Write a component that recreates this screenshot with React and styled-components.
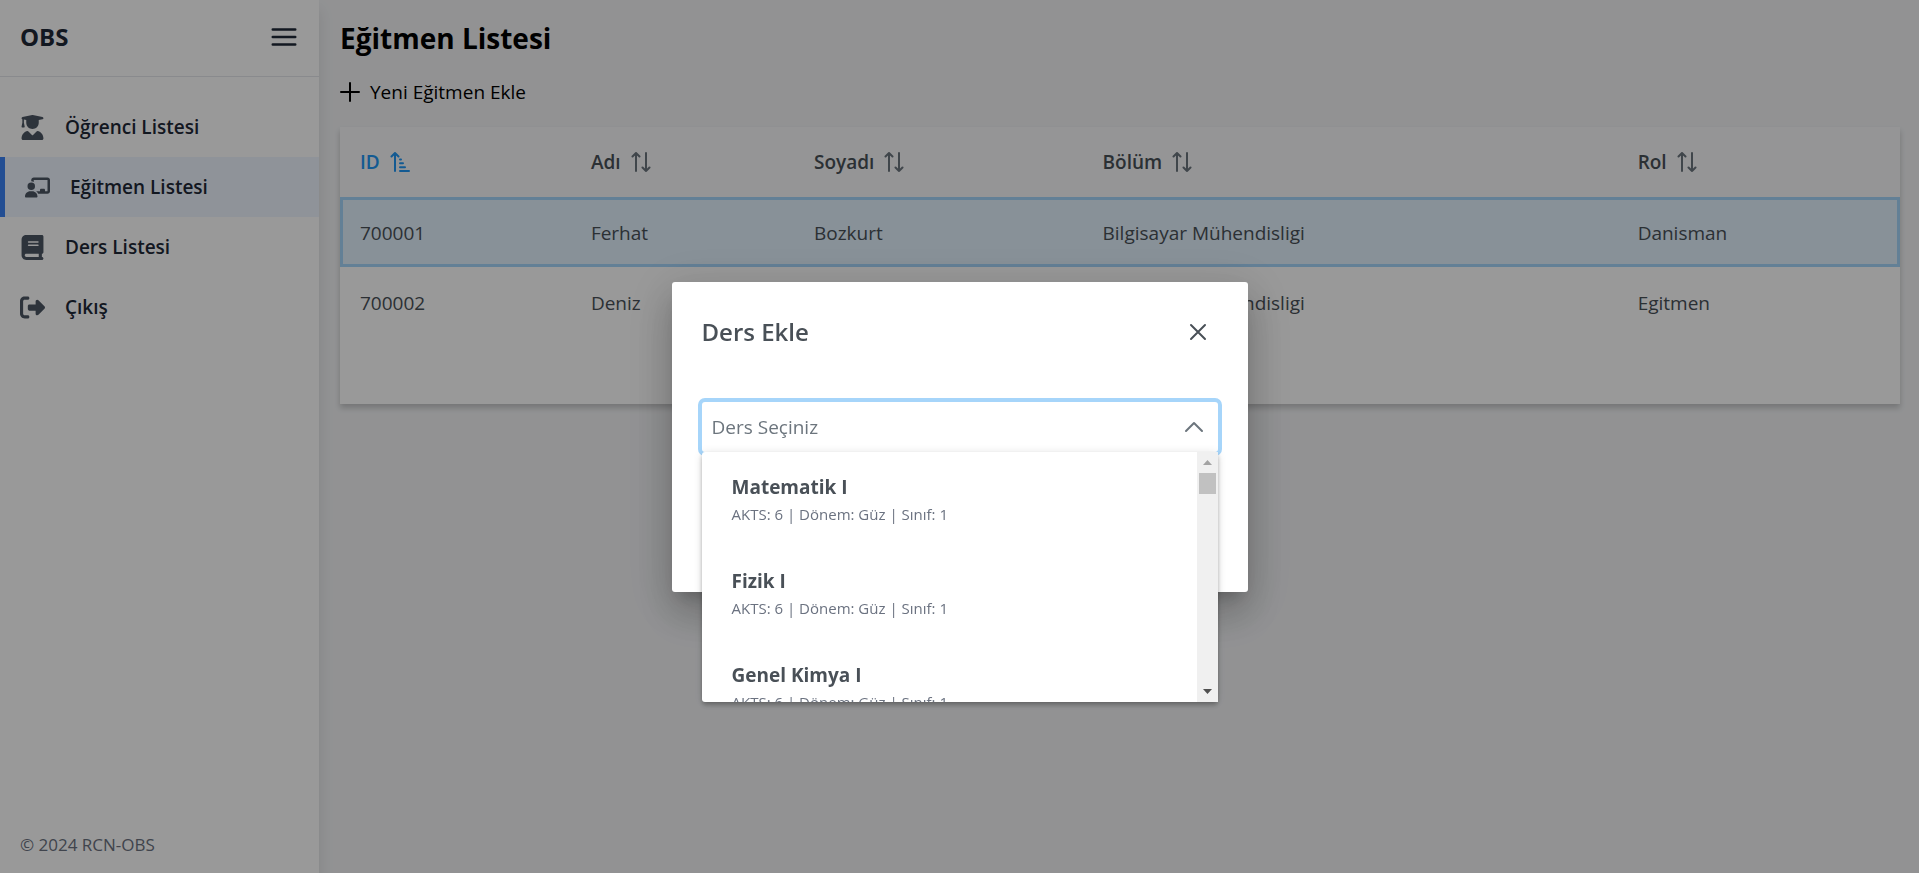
import React from "react";
import styled, { createGlobalStyle, css } from "styled-components";
import {
  FaUserGraduate,
  FaChalkboardUser,
  FaBook,
  FaRightFromBracket,
} from "react-icons/fa6";

const GlobalStyle = createGlobalStyle`
  *, *::before, *::after { box-sizing: border-box; }
  body {
    margin: 0;
    background: #f3f4f6;
    color: #000;
    font-family: "Open Sans", "Noto Sans", sans-serif;
    font-size: 19px;
    line-height: 30px;
  }
  button, select { font: inherit; color: inherit; }
  h1, h2, ul { margin: 0; padding: 0; }
  ul { list-style: none; }
`;

const Layout = styled.div`
  display: flex;
  min-height: 100vh;
`;

const Sidebar = styled.aside`
  display: flex;
  flex-direction: column;
  flex: 0 0 auto;
  width: 319px;
  background: #fff;
  box-shadow: 0 10px 15px rgba(0, 0, 0, 0.1);
`;

const SidebarHeader = styled.header`
  display: flex;
  align-items: center;
  justify-content: space-between;
  height: 77px;
  padding: 0 20px 2px;
  border-bottom: 1px solid #e5e7eb;
  color: #1f2937;
`;

const Brand = styled.span`
  font-size: 24px;
  font-weight: 700;
`;

const IconButton = styled.button`
  display: grid;
  place-items: center;
  padding: 0;
  border: 0;
  background: none;
  cursor: pointer;
`;

const Nav = styled.nav`
  flex: 1;
  padding-top: 20px;
`;

const NavLink = styled.a`
  display: flex;
  align-items: center;
  gap: 20px;
  height: 60px;
  padding: 0 20px;
  color: #1f2937;
  font-weight: 600;
  text-decoration: none;

  svg {
    width: 25px;
    height: 25px;
    color: #4b5563;
  }

  ${(p) =>
    p.$active &&
    css`
      border-left: 5px solid #3b82f6;
      background: #eff6ff;
    `}
`;

const Copyright = styled.footer`
  padding: 0 20px;
  height: 43px;
  color: #6b7280;
  font-size: 17px;
`;

const Main = styled.main`
  flex: 1;
  min-width: 0;
  padding: 19px 19px 20px 21px;
`;

const PageTitle = styled.h1`
  font-size: 28px;
  font-weight: 700;
  line-height: 38px;
`;

const AddButton = styled.button`
  display: flex;
  align-items: center;
  gap: 10px;
  margin: 20px 0;
  padding: 0;
  border: 0;
  background: none;
  cursor: pointer;
`;

const TableCard = styled.section`
  padding-bottom: 67px;
  background: #fff;
  box-shadow: 0 4px 6px rgba(0, 0, 0, 0.2);
`;

const Table = styled.table`
  width: 100%;
  table-layout: fixed;
  border-collapse: collapse;
  color: #495057;
  text-align: left;
`;

const HeadCell = styled.th`
  width: ${(p) => p.$width};
  height: 70px;
  padding: 0 20px;
  background: #f8f9fa;
  color: ${(p) => (p.$sorted ? "#2196f3" : "#495057")};
  font-weight: 600;
`;

const SortButton = styled.button`
  display: inline-flex;
  align-items: center;
  gap: 10px;
  padding: 0;
  border: 0;
  background: none;
  cursor: pointer;

  svg {
    color: ${(p) => (p.$sorted ? "#2196f3" : "#6c757d")};
  }
`;

const Row = styled.tr`
  ${(p) =>
    p.$selected &&
    css`
      background: #e3f2fd;
      outline: 3px solid #a6d5fa;
      outline-offset: -3px;
    `}
`;

const Cell = styled.td`
  height: 70px;
  padding: 2px 20px 0;
`;

const Overlay = styled.div`
  position: fixed;
  inset: 0;
  display: grid;
  place-items: center;
  background: rgba(0, 0, 0, 0.4);
`;

const Dialog = styled.div`
  width: 30vw;
  min-width: 576px;
  border-radius: 3px;
  background: #fff;
  color: #495057;
  box-shadow:
    0 11px 15px -7px rgba(0, 0, 0, 0.2),
    0 24px 38px 3px rgba(0, 0, 0, 0.14),
    0 9px 46px 8px rgba(0, 0, 0, 0.12);
`;

const DialogHeader = styled.header`
  display: flex;
  align-items: center;
  justify-content: space-between;
  padding: 30px;

  button {
    width: 40px;
    height: 40px;
  }
`;

const DialogTitle = styled.h2`
  font-size: 24px;
  font-weight: 600;
`;

const DialogBody = styled.div`
  padding: 20px 30px 140px;
`;

const Field = styled.div`
  position: relative;
`;

const Select = styled.select`
  display: block;
  width: 100%;
  height: 50px;
  padding: 0 50px 0 10px;
  appearance: none;
  border: 0;
  border-radius: 3px;
  outline: 0;
  background: #fff;
  box-shadow: 0 0 0 4px #a6d5fa;
  color: #6c757d;
`;

const SelectIcon = styled.span`
  position: absolute;
  top: 0;
  right: 0;
  display: grid;
  place-items: center;
  width: 48px;
  height: 50px;
  color: #6c757d;
  pointer-events: none;
`;

const Panel = styled.div`
  position: absolute;
  top: 100%;
  left: 0;
  right: 0;
  display: flex;
  height: 250px;
  border-radius: 3px;
  background: #fff;
  box-shadow:
    0 4px 5px rgba(0, 0, 0, 0.14),
    0 1px 10px rgba(0, 0, 0, 0.12),
    0 2px 4px -1px rgba(0, 0, 0, 0.2);
`;

const OptionList = styled.ul`
  flex: 1;
  overflow-y: auto;
  scrollbar-width: none;
`;

const Option = styled.li`
  padding: 20px 30px;
`;

const OptionName = styled.div`
  font-weight: 700;
`;

const OptionInfo = styled.div`
  color: #6b7280;
  font-size: 15px;
  line-height: 24px;
`;

const ScrollTrack = styled.div`
  display: flex;
  flex-direction: column;
  align-items: center;
  width: 21px;
  background: #f0f0f0;
`;

const ScrollArrow = styled.span`
  display: grid;
  place-items: center;
  width: 21px;
  height: 21px;
  color: ${(p) => (p.$disabled ? "#a3a3a3" : "#505050")};
`;

const ScrollThumb = styled.span`
  width: 17px;
  height: 21px;
  margin-bottom: auto;
  background: #c1c1c1;
`;

const strokeProps = {
  fill: "none",
  stroke: "currentColor",
  strokeLinecap: "round",
  strokeLinejoin: "round",
  "aria-hidden": true,
};

const MenuIcon = () => (
  <svg width="30" height="30" viewBox="0 0 24 24" strokeWidth="2" {...strokeProps}>
    <path d="M3 6h18M3 12h18M3 18h18" />
  </svg>
);

const PlusIcon = () => (
  <svg width="20" height="20" viewBox="0 0 20 20" strokeWidth="2" {...strokeProps}>
    <path d="M10 1v18M1 10h18" />
  </svg>
);

const CloseIcon = () => (
  <svg width="18" height="18" viewBox="0 0 18 18" strokeWidth="2" {...strokeProps}>
    <path d="M2 2l14 14M16 2L2 16" />
  </svg>
);

const ChevronUpIcon = () => (
  <svg width="20" height="20" viewBox="0 0 20 20" strokeWidth="2" {...strokeProps}>
    <path d="M2 14l8-8 8 8" />
  </svg>
);

const SortIcon = () => (
  <svg width="20" height="20" viewBox="0 0 20 20" strokeWidth="2" {...strokeProps}>
    <path d="M5 19V1M1.500 4.500L5 1l3.500 3.500M15 1v18M11.500 15.500L15 19l3.500-3.500" />
  </svg>
);

const SortAscIcon = () => (
  <svg width="20" height="20" viewBox="0 0 20 20" strokeWidth="2" {...strokeProps}>
    <path d="M5 19V1M1.500 4.500L5 1l3.500 3.500M10 7.500h1M10 11.300h3M10 15.200h5M10 19h9" />
  </svg>
);

const Triangle = ({ d }) => (
  <svg width="9" height="5" viewBox="0 0 9 5" aria-hidden="true">
    <path d={d} fill="currentColor" />
  </svg>
);

const links = [
  { label: "Öğrenci Listesi", Icon: FaUserGraduate },
  { label: "Eğitmen Listesi", Icon: FaChalkboardUser, active: true },
  { label: "Ders Listesi", Icon: FaBook },
  { label: "Çıkış", Icon: FaRightFromBracket },
];

const columns = [
  { label: "ID", width: "14.8%", sorted: true },
  { label: "Adı", width: "14.3%" },
  { label: "Soyadı", width: "18.5%" },
  { label: "Bölüm", width: "34.3%" },
  { label: "Rol", width: "18.1%" },
];

const rows = [
  ["700001", "Ferhat", "Bozkurt", "Bilgisayar Mühendisligi", "Danisman"],
  ["700002", "Deniz", "", "Bilgisayar Mühendisligi", "Egitmen"],
];

const courses = ["Matematik I", "Fizik I", "Genel Kimya I"];

export default function App() {
  return (
    <>
      <GlobalStyle />
      <Layout>
        <Sidebar>
          <SidebarHeader>
            <Brand>OBS</Brand>
            <IconButton type="button" aria-label="Menü">
              <MenuIcon />
            </IconButton>
          </SidebarHeader>
          <Nav>
            {links.map(({ label, Icon, active }) => (
              <NavLink
                key={label}
                href="#"
                $active={active}
                aria-current={active ? "page" : undefined}
              >
                <Icon aria-hidden="true" />
                {label}
              </NavLink>
            ))}
          </Nav>
          <Copyright>© 2024 RCN-OBS</Copyright>
        </Sidebar>

        <Main>
          <PageTitle>Eğitmen Listesi</PageTitle>
          <AddButton type="button">
            <PlusIcon />
            Yeni Eğitmen Ekle
          </AddButton>
          <TableCard>
            <Table>
              <thead>
                <tr>
                  {columns.map(({ label, width, sorted }) => (
                    <HeadCell
                      key={label}
                      scope="col"
                      $width={width}
                      $sorted={sorted}
                      aria-sort={sorted ? "ascending" : "none"}
                    >
                      <SortButton type="button" $sorted={sorted}>
                        {label}
                        {sorted ? <SortAscIcon /> : <SortIcon />}
                      </SortButton>
                    </HeadCell>
                  ))}
                </tr>
              </thead>
              <tbody>
                {rows.map((row, index) => (
                  <Row key={row[0]} $selected={index === 0}>
                    {row.map((value, i) => (
                      <Cell key={columns[i].label}>{value}</Cell>
                    ))}
                  </Row>
                ))}
              </tbody>
            </Table>
          </TableCard>
        </Main>
      </Layout>

      <Overlay>
        <Dialog role="dialog" aria-modal="true" aria-labelledby="dialog-title">
          <DialogHeader>
            <DialogTitle id="dialog-title">Ders Ekle</DialogTitle>
            <IconButton type="button" aria-label="Kapat">
              <CloseIcon />
            </IconButton>
          </DialogHeader>
          <DialogBody>
            <Field>
              <Select aria-label="Ders" defaultValue="">
                <option value="">Ders Seçiniz</option>
                {courses.map((course) => (
                  <option key={course}>{course}</option>
                ))}
              </Select>
              <SelectIcon>
                <ChevronUpIcon />
              </SelectIcon>
              <Panel>
                <OptionList role="listbox" aria-label="Dersler">
                  {courses.map((course) => (
                    <Option key={course} role="option" aria-selected="false">
                      <OptionName>{course}</OptionName>
                      <OptionInfo>AKTS: 6 | Dönem: Güz | Sınıf: 1</OptionInfo>
                    </Option>
                  ))}
                </OptionList>
                <ScrollTrack aria-hidden="true">
                  <ScrollArrow $disabled>
                    <Triangle d="M0 5L4.500 0 9 5z" />
                  </ScrollArrow>
                  <ScrollThumb />
                  <ScrollArrow>
                    <Triangle d="M0 0h9L4.500 5z" />
                  </ScrollArrow>
                </ScrollTrack>
              </Panel>
            </Field>
          </DialogBody>
        </Dialog>
      </Overlay>
    </>
  );
}
